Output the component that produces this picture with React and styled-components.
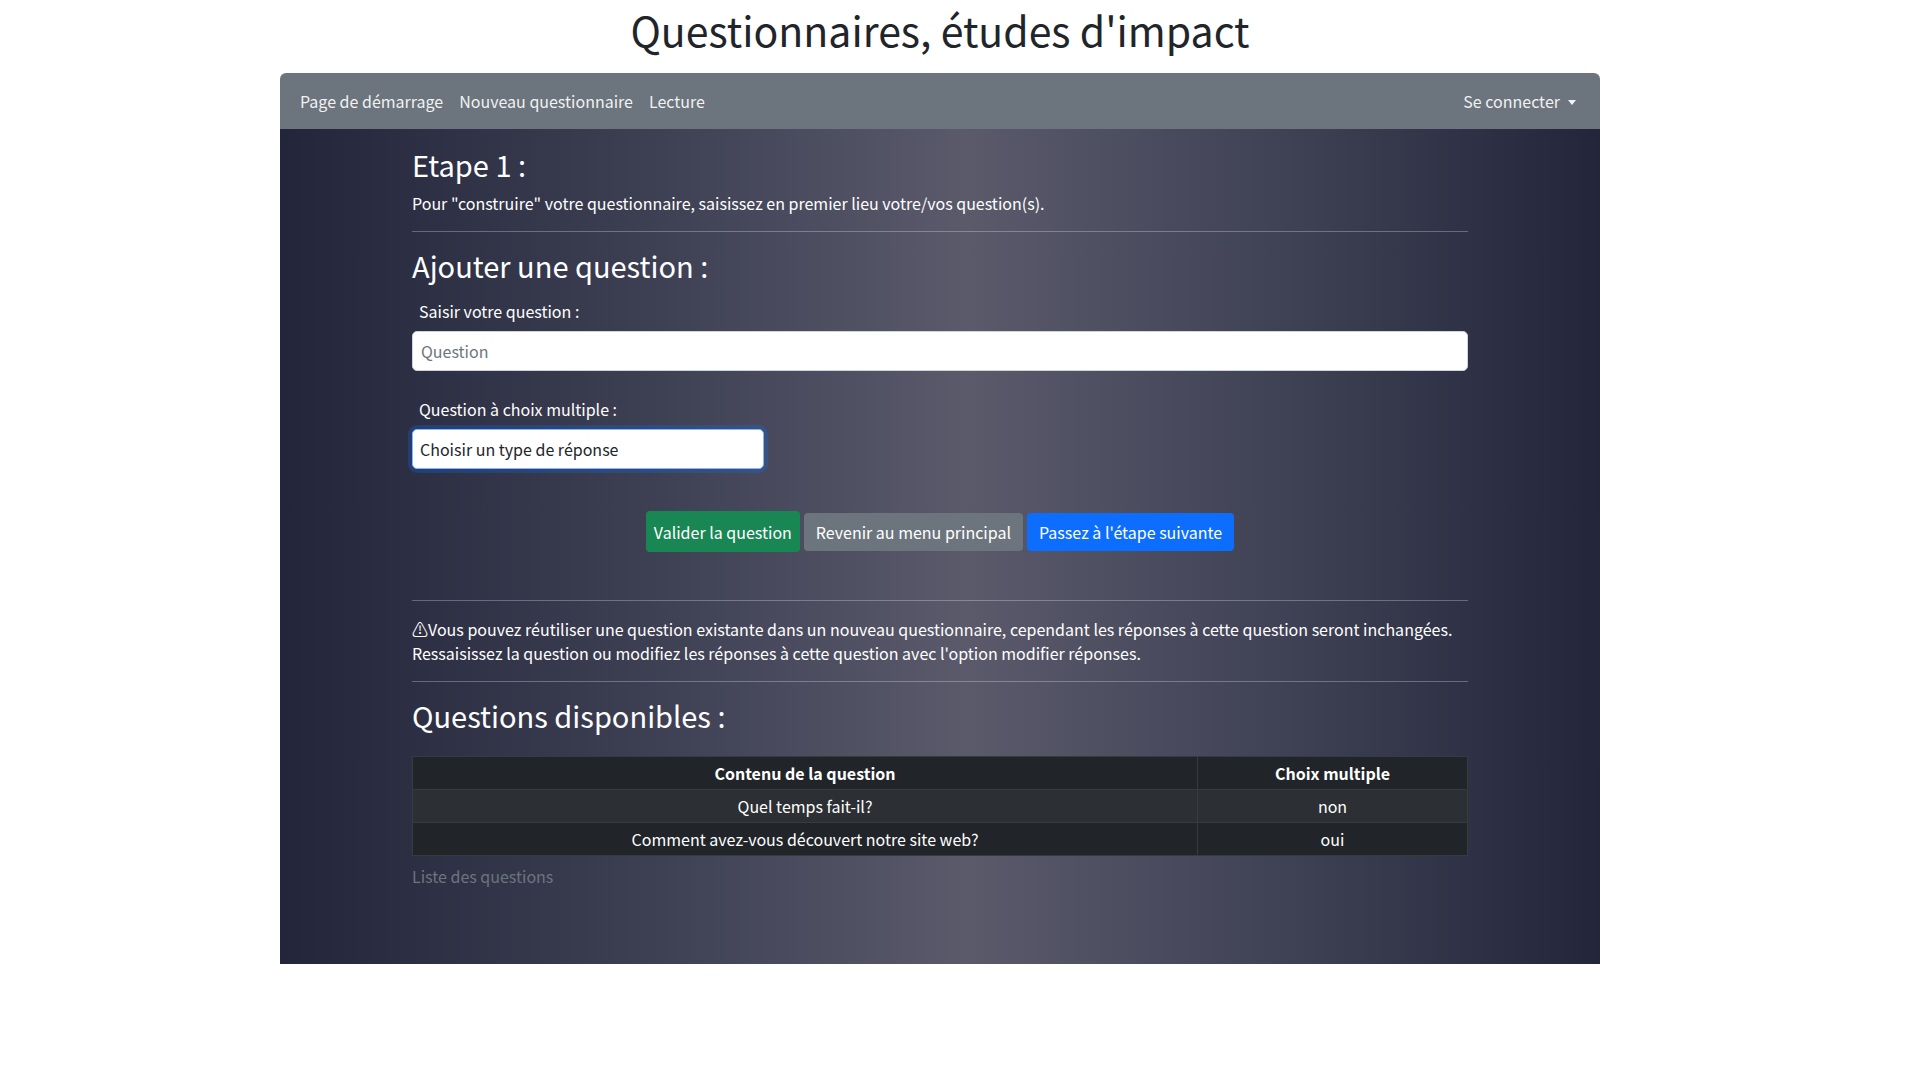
import React from "react";
import styled, { createGlobalStyle } from "styled-components";

const GlobalStyle = createGlobalStyle`
  * {
    box-sizing: border-box;
  }
  body {
    margin: 0;
    padding-right: 40px;
    background: #fff;
    font-family: "Noto Sans CJK KR", "Noto Sans", sans-serif;
    font-size: 16px;
    line-height: 1.5;
    color: #212529;
  }
`;

const Page = styled.div`
  width: 1320px;
  margin: 0 auto;
`;

const Title = styled.h1`
  margin: 0;
  padding: 0 0 14px;
  font-size: 41px;
  font-weight: 400;
  line-height: 59px;
  text-align: center;
  color: #212529;
`;

const Navbar = styled.nav`
  height: 56px;
  padding: 0 16px 0 12px;
  display: flex;
  align-items: center;
  justify-content: space-between;
  background-color: #6c757d;
  border-radius: 6px 6px 0 0;
`;

const NavGroup = styled.div`
  display: flex;
  align-items: center;
`;

const NavLink = styled.a`
  padding: 8px;
  color: rgba(255, 255, 255, 0.92);
  text-decoration: none;
  cursor: pointer;
`;

const Caret = styled.span`
  display: inline-block;
  margin-left: 8px;
  vertical-align: 3px;
  border-top: 5px solid rgba(255, 255, 255, 0.92);
  border-left: 4px solid transparent;
  border-right: 4px solid transparent;
`;

const Main = styled.main`
  height: 835px;
  padding-top: 18px;
  background: linear-gradient(
    to right,
    #23253a 0%,
    #3d3f53 28%,
    #5a5a6b 52%,
    #3d3f53 78%,
    #23253a 100%
  );
  color: #fff;
`;

const Column = styled.div`
  width: 1056px;
  margin: 0 auto;
`;

const Heading = styled.h2`
  margin: 0 0 ${({ $gap }) => $gap || 8}px;
  font-size: 29px;
  font-weight: 400;
  line-height: 35px;
`;

const Text = styled.p`
  margin: 0 0 16px;
`;

const Rule = styled.hr`
  margin: 0 0 16px;
  border: 0;
  border-top: 1px solid rgba(255, 255, 255, 0.28);
`;

const Field = styled.div`
  margin-bottom: ${({ $gap }) => $gap || 0}px;
`;

const Label = styled.label`
  display: block;
  margin-bottom: 8px;
  padding-left: 7px;
`;

const Input = styled.input`
  display: block;
  width: 100%;
  height: 40px;
  padding: 6px 8px;
  font: inherit;
  color: #212529;
  background: #fff;
  border: 1px solid #ced4da;
  border-radius: 5px;
  outline: none;
  &::placeholder {
    color: #6c757d;
  }
`;

const Select = styled.select`
  display: block;
  width: 352px;
  height: 40px;
  padding: 6px 7px;
  font: inherit;
  color: #212529;
  background: #fff;
  border: 1px solid #86b7fe;
  border-radius: 5px;
  box-shadow: 0 0 0 4px rgba(13, 110, 253, 0.25);
  appearance: none;
  outline: none;
`;

const Actions = styled.div`
  display: flex;
  justify-content: center;
  align-items: center;
  gap: 4px;
  margin-bottom: 48px;
`;

const Button = styled.button`
  height: ${({ $tall }) => ($tall ? 41 : 38)}px;
  padding: 0 ${({ $pad }) => $pad || 12}px;
  font: inherit;
  color: #fff;
  background-color: ${({ $bg }) => $bg};
  border: 0;
  border-radius: 4px;
  cursor: pointer;
`;

const Warning = styled.p`
  margin: 0 0 16px;
`;

const Table = styled.table`
  width: 100%;
  border-collapse: collapse;
  caption-side: bottom;
  text-align: center;
`;

const Caption = styled.caption`
  padding-top: 8px;
  text-align: left;
  color: #6c757d;
`;

const Th = styled.th`
  height: 33px;
  padding: 0 8px;
  width: ${({ $width }) => $width || "auto"};
  font-weight: 700;
  background-color: #212529;
  border: 1px solid #373b3e;
`;

const Td = styled.td`
  height: 33px;
  padding: 0 8px;
  background-color: ${({ $striped }) => ($striped ? "#2c3034" : "#212529")};
  border: 1px solid #373b3e;
`;

const questions = [
  { text: "Quel temps fait-il?", multiple: "non" },
  { text: "Comment avez-vous découvert notre site web?", multiple: "oui" },
];

const App = () => {
  return (
    <Page>
      <GlobalStyle />
      <Title>Questionnaires, études d'impact</Title>
      <Navbar>
        <NavGroup>
          <NavLink>Page de démarrage</NavLink>
          <NavLink>Nouveau questionnaire</NavLink>
          <NavLink>Lecture</NavLink>
        </NavGroup>
        <NavLink>
          Se connecter
          <Caret />
        </NavLink>
      </Navbar>
      <Main>
        <Column>
          <Heading $gap={9}>Etape 1 :</Heading>
          <Text>
            Pour "construire" votre questionnaire, saisissez en premier lieu votre/vos question(s).
          </Text>
          <Rule />
          <Heading $gap={16}>Ajouter une question :</Heading>
          <Field $gap={26}>
            <Label>Saisir votre question :</Label>
            <Input placeholder="Question" />
          </Field>
          <Field $gap={42}>
            <Label>Question à choix multiple :</Label>
            <Select defaultValue="">
              <option value="">Choisir un type de réponse</option>
              <option value="oui">oui</option>
              <option value="non">non</option>
            </Select>
          </Field>
          <Actions>
            <Button $bg="#198754" $tall $pad={8}>Valider la question</Button>
            <Button $bg="#6c757d">Revenir au menu principal</Button>
            <Button $bg="#0d6efd">Passez à l'étape suivante</Button>
          </Actions>
          <Rule />
          <Warning>
            ⚠Vous pouvez réutiliser une question existante dans un nouveau questionnaire, cependant les réponses à cette question seront inchangées.
            <br />
            Ressaisissez la question ou modifiez les réponses à cette question avec l'option modifier réponses.
          </Warning>
          <Rule />
          <Heading $gap={23}>Questions disponibles :</Heading>
          <Table>
            <Caption>Liste des questions</Caption>
            <thead>
              <tr>
                <Th>Contenu de la question</Th>
                <Th $width="270px">Choix multiple</Th>
              </tr>
            </thead>
            <tbody>
              {questions.map((q, i) => (
                <tr key={q.text}>
                  <Td $striped={i % 2 === 0}>{q.text}</Td>
                  <Td $striped={i % 2 === 0}>{q.multiple}</Td>
                </tr>
              ))}
            </tbody>
          </Table>
        </Column>
      </Main>
    </Page>
  );
};

export default App;
